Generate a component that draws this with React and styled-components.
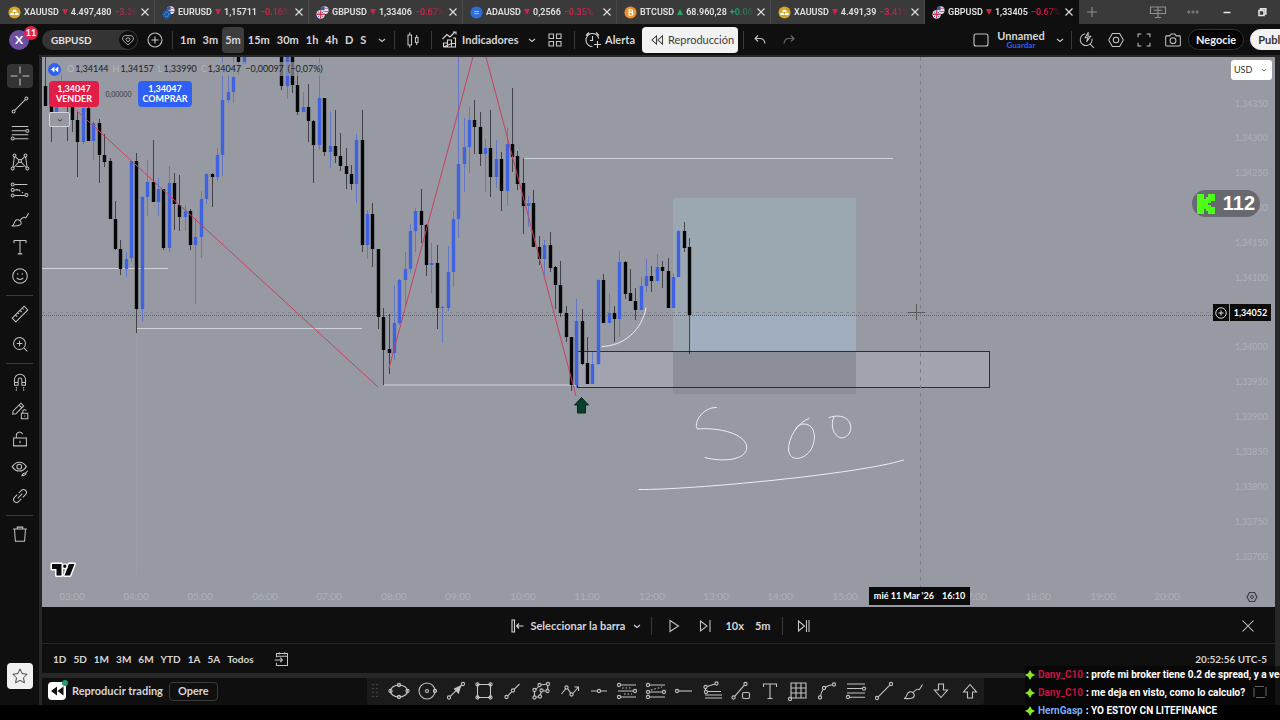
import { useState } from "react";
import styled, { createGlobalStyle, css } from "styled-components";

const UP = "#3f62e0";
const DOWN = "#060709";

// [high, top, bottom, low, 1 = up / 0 = down], null = out of view
const candles = [
  [57, 86, 106, 106, 0], [95, 105, 112, 142, 0], [104, 106, 112, 113, 1], [70, 90, 104, 106, 1],
  [95, 98, 106, 141, 0], [100, 107, 120, 132, 0], [112, 120, 142, 177, 0], [104, 108, 142, 144, 1],
  [104, 108, 141, 141, 0], [121, 123, 141, 160, 1], [119, 123, 155, 183, 0], [134, 155, 162, 167, 0],
  [158, 161, 219, 219, 0], [201, 219, 249, 250, 0], [240, 249, 269, 275, 0], [252, 259, 269, 277, 1],
  [161, 161, 258, 262, 1], [153, 161, 309, 333, 0], [196, 197, 309, 322, 1], [160, 182, 197, 216, 1],
  [140, 182, 202, 202, 0], [178, 189, 202, 216, 1], [189, 189, 248, 250, 0], [166, 183, 248, 252, 1],
  [173, 183, 204, 230, 0], [175, 205, 217, 231, 0], [205, 211, 217, 231, 1], [209, 211, 245, 250, 0],
  [218, 237, 245, 304, 1], [191, 199, 237, 258, 1], [173, 174, 199, 204, 1], [173, 174, 177, 207, 0],
  [148, 155, 177, 181, 1], [55, 100, 155, 176, 1], [75, 92, 100, 103, 1], [55, 77, 92, 103, 1],
  [55, 56, 62, 75, 0], [55, 56, 64, 66, 1], null, null, null, null, null, null,
  [55, 56, 86, 90, 0], [55, 56, 86, 99, 1], [55, 56, 85, 93, 0], [72, 85, 112, 115, 0],
  [92, 107, 112, 112, 1], [84, 107, 121, 142, 0], [120, 121, 145, 183, 0], [58, 98, 145, 150, 1],
  [98, 98, 152, 156, 0], [112, 146, 152, 168, 1], [110, 146, 156, 163, 0], [133, 156, 166, 171, 0],
  [148, 166, 174, 189, 0], [165, 174, 184, 190, 0], [134, 140, 184, 203, 1], [110, 140, 245, 252, 0],
  [210, 214, 245, 259, 1], [203, 214, 249, 267, 0], [249, 249, 317, 329, 0], [308, 317, 350, 385, 0],
  [314, 349, 353, 374, 0], [285, 323, 353, 360, 1], [279, 280, 323, 325, 1], [252, 269, 280, 306, 1],
  [224, 231, 269, 273, 1], [208, 211, 231, 252, 1], [189, 211, 225, 243, 0], [224, 225, 265, 276, 0],
  [243, 263, 265, 293, 1], [245, 263, 308, 329, 0], [306, 307, 308, 343, 1], [246, 272, 308, 311, 1],
  [211, 219, 272, 287, 1], [55, 164, 219, 238, 1], [118, 147, 164, 192, 1], [107, 120, 147, 173, 1],
  [100, 120, 127, 154, 0], [112, 127, 154, 166, 0], [139, 148, 154, 192, 1], [110, 148, 177, 197, 0],
  [140, 159, 177, 188, 1], [152, 159, 191, 211, 0], [128, 144, 191, 206, 1], [88, 144, 157, 172, 0],
  [151, 156, 184, 190, 0], [158, 183, 206, 234, 0], [196, 203, 206, 227, 1], [190, 203, 247, 247, 0],
  [236, 247, 259, 265, 0], [240, 245, 259, 275, 1], [232, 245, 268, 272, 0], [266, 267, 285, 309, 0],
  [261, 285, 313, 317, 0], [306, 313, 337, 342, 0], [337, 337, 385, 391, 0], [299, 321, 385, 388, 1],
  [309, 321, 364, 365, 0], [337, 363, 384, 384, 0], [352, 364, 384, 384, 1], [279, 280, 364, 365, 1],
  [274, 280, 323, 323, 0], [293, 313, 323, 323, 1], [306, 313, 319, 342, 0], [251, 262, 319, 337, 1],
  [261, 262, 294, 299, 0], [269, 293, 301, 301, 0], [288, 301, 310, 320, 0], [277, 286, 310, 310, 1],
  [259, 276, 286, 292, 1], [266, 276, 281, 292, 0], [254, 267, 281, 281, 1], [261, 267, 271, 288, 0],
  [258, 271, 308, 308, 0], [273, 277, 308, 308, 1], [230, 231, 277, 277, 1], [222, 231, 248, 252, 0],
  [238, 247, 315, 354, 0],
];

const tabs = [
  { coin: "gold", name: "XAUUSD", price: "4.497,480", change: "−3.29%" },
  { coin: "eur", name: "EURUSD", price: "1,15711", change: "−0.16%" },
  { coin: "gbp", name: "GBPUSD", price: "1,33406", change: "−0.67%" },
  { coin: "ada", name: "ADAUSD", price: "0,2566", change: "−0.35%" },
  { coin: "btc", name: "BTCUSD", price: "68.960,28", change: "+0.06%", up: true },
  { coin: "gold", name: "XAUUSD", price: "4.491,39", change: "−3.41%" },
  { coin: "gbp", name: "GBPUSD", price: "1,33405", change: "−0.67%", active: true },
];

const intervals = ["1m", "3m", "5m", "15m", "30m", "1h", "4h", "D", "S"];
const ranges = ["1D", "5D", "1M", "3M", "6M", "YTD", "1A", "5A", "Todos"];
const prices = [
  "1,34350", "1,34300", "1,34250", "1,34200", "1,34150", "1,34100", null,
  "1,34000", "1,33950", "1,33900", "1,33850", "1,33800", "1,33750", "1,33700",
];
const messages = [
  { user: "Dany_C10", color: "#c4123f", text: "profe mi broker tiene 0.2 de spread, y a veces" },
  { user: "Dany_C10", color: "#c4123f", text: "me deja en visto, como lo calculo?" },
  { user: "HernGasp", color: "#78aef5", text: "YO ESTOY CN LITEFINANCE" },
];

const dot = (x, y) => <circle key={`${x}-${y}`} cx={x} cy={y} r="1.6" />;

// all of them on a 24 x 24 grid
const icons = {
  cross: <path d="M12 2.5v7M12 14.5v7M2.5 12h7M14.5 12h7" />,
  trend: <>{dot(5, 19)}{dot(19, 5)}<path d="M6.2 17.8 17.8 6.2" /></>,
  fib: <>{dot(20, 9.7)}{dot(4, 18)}<path d="M3 5h18M3 9.5h15.4M3 14h18M5.6 18.3H21" /></>,
  pattern: <>{dot(6, 5)}{dot(18, 5)}{dot(12, 11)}{dot(4, 19)}{dot(20, 19)}<path d="M5.8 6.6 4.3 17.4M18.2 6.6l1.5 10.8M7 6.3l4 3.6M17 6.3l-4 3.6M10.7 12l-5.4 6M13.3 12l5.4 6M8 17h8" /></>,
  position: <>{dot(4, 6)}{dot(20, 12)}{dot(4, 18)}<path d="M5.6 6H21M3 12h15.400M5.6 18H21" /><path strokeDasharray="1.5 2" d="M7 9h9M9 15h8" /></>,
  ghost: <>{dot(4, 6)}{dot(4, 13)}{dot(20, 13)}{dot(4, 18)}<path d="M5.6 6H21M5.6 18H21M5.6 13h12.800" /><path strokeDasharray="1.5 2" d="m7 11 11-3" /></>,
  ghostLeft: <>{dot(4, 6)}{dot(4, 12)}{dot(4, 18)}{dot(19, 17.500)}<path d="M5.6 6H20M5.6 12H12M5.6 18h11.800" /><path strokeDasharray="1.5 2" d="m8 11 9 5" /></>,
  brush: <path d="M3 19.5c2.4-.4 2.4-2.5 3.2-4.4C7.200 12.700 10 12 12 13.700s1.600 4.300-.6 5.200c-2 .9-5 .8-8.400.6ZM12 13.600c1.800-2 4-4 5.200-3.200 1.300.9 1.400 0 4.300-4.900" />,
  text: <path d="M5.500 8V5h13v3M12 5v14.500M9.500 19.500h5" />,
  smile: <><circle cx="12" cy="12" r="8" /><path d="M8.500 14c1.500 2.500 5.500 2.500 7 0M9.500 9v1.500M14.500 9v1.500" /></>,
  ruler: <path d="m3.500 16.500 13-13 4 4-13 13ZM7 13l2 2M9.500 10.500 11 12M12 8l2 2M14.500 5.500 16 7" />,
  zoom: <><circle cx="11.500" cy="11.500" r="6.500" /><path d="m16.500 16.500 3.500 3.500M11.500 8.500v6M8.500 11.500h6" /></>,
  magnet: <><path d="M6 15.500V9.500a6 6 0 0 1 12 0v6h-4V9.700a2 2 0 0 0-4 0v5.800ZM6 12.500h4M14 12.500h4" /><path strokeDasharray="1.500 1" d="M8 17.500v4M16 17.500v4" /></>,
  penLock: <><path d="m4 15.500.5-3.500L13 3.500l3 3L7.500 15ZM11 5.500l3 3M13.500 14.500h7v6h-7ZM15 14.500V12.500a2 2 0 0 1 3.800-.8M17 17v1" /></>,
  lock: <path d="M5 11h14v8.500H5ZM8 11V8a3.500 3.500 0 0 1 6.800-1.200M12 14v2.500" />,
  eye: <><path d="M3.500 10.500c4-6.500 11.500-6.500 15.500 0-4 6.500-11.500 6.500-15.500 0Z" /><circle cx="11.200" cy="10.500" r="2.600" /><path d="M14 20.500c1-2.500 2-3.500 4-3s-1 3-4 3ZM18 17.500l2.500-2.500" /></>,
  link: <path d="m9.500 14.500 5-5M10.500 9 13.800 5.700a3.200 3.200 0 0 1 4.500 4.500L15 13.500M9 10.500l-3.300 3.300a3.200 3.200 0 0 0 4.500 4.500L13.500 15" />,
  trash: <path d="M4.500 6.500h15M9 6V4.500h6V6M6 6.500l1 13.500h10l1-13.500" />,
  star: <path d="m12 3.500 2.600 5.600 6 .8-4.400 4.200 1.100 6.100-5.300-3-5.300 3 1.100-6.100L3.400 9.900l6-.8Z" />,
  down: <path d="m9 11 3 2.500 3-2.500" />,
  up: <path d="m9 13 3-2.500 3 2.500" />,
  plusCircle: <><circle cx="12" cy="12" r="7" /><path d="M12 8.500v7M8.500 12h7" /></>,
  plus: <path d="M12 7v10M7 12h10" />,
  close: <path d="m8.500 8.500 7 7M15.500 8.500l-7 7" />,
  bigClose: <path d="m6 6 12 12M18 6 6 18" />,
  badge: <><path d="M12 19.500 4.500 12.500c-1.500-2.500 0-7 2.500-7h10c2.500 0 4 4.500 2.500 7Z" /><path d="m12 15-3-3.500 1-2.500h4l1 2.500Z" /></>,
  bars: <path d="M7 7h3.500v10H7ZM8.700 4.500V7M8.700 17v2.500M14.500 9.500H17v5h-2.500ZM15.700 7v2.500M15.700 14.500V17" />,
  indicators: <path d="M5.500 19v-4h4v4M9.500 19v-7h4v7M13.500 15.500h4V19h-12ZM17.500 19v-9h-2.500M4.500 11l4.500-4.500 3 2.500 5-5M15 4h3v2.500" />,
  layouts: <path d="M6 6h4.500v4.500H6ZM13.500 6H18v4.500h-4.500ZM6 13.500h4.500V18H6ZM13.500 13.500H18V18h-4.500Z" />,
  alarm: <path d="M17.800 10.500A6.500 6.500 0 1 0 11.500 18.500M11.500 8v4.500H9M5 7.500l3-3M15 4.500l3 3M16.500 13v7M13 16.500h7" />,
  rewind: <path d="M11.500 7.500v9l-5-4.500ZM18 7.500v9l-5-4.500Z" />,
  undo: <path d="M10 7.500 7 10.500l3 3M7 10.500h5.500c2.500 0 4 2 4.500 5" />,
  redo: <path d="m14 7.500 3 3-3 3M17 10.500h-5.500c-2.500 0-4 2-4.500 5" />,
  square: <rect x="5" y="6" width="14" height="12" rx="2" />,
  quick: <path d="M17.500 10.500a6.500 6.500 0 1 1-7.500-5.300M15.500 16.500l4 4M13.500 3.500 10 9.500h3L11.500 14l4.500-6h-3Z" />,
  hex: <><path d="M8 5h8l4 7-4 7H8l-4-7Z" /><circle cx="12" cy="12" r="3" /></>,
  full: <path d="M9 5.500H5.500V9M15 5.500h3.500V9M9 18.500H5.500V15M15 18.500h3.500V15" />,
  camera: <><path d="M5 7.500h3.500L10 5.500h4l1.500 2H19c.8 0 1 .5 1 1v9c0 .6-.4 1-1 1H5c-.6 0-1-.4-1-1v-9c0-.5.3-1 1-1Z" /><circle cx="12" cy="12.700" r="3.200" /></>,
  screens: <path d="M4.500 7h15v6.500h-15ZM12 7v10.500M9 17.500h6M8 10.300h8" />,
  more: <><circle cx="7" cy="12" r="1.300" /><circle cx="12" cy="12" r="1.300" /><circle cx="17" cy="12" r="1.300" /></>,
  minimize: <path strokeWidth="1.500" d="M8.500 12.500h7" />,
  restore: <path strokeWidth="1.500" d="M9 10.500h5v5H9ZM10.500 10V8.700h5.300v5.300h-1.300" />,
  selectBar: <path d="M6 6h2.500v12H6ZM17.500 12h-7M13 9.500 10.500 12l2.500 2.500" />,
  play: <path d="M8 6.500 16.500 12 8 17.500Z" />,
  next: <path d="M7.500 7 14 12l-6.500 5ZM17 6v12" />,
  toEnd: <path d="M6.500 7 12.500 12l-6 5ZM14.500 6v12M17 6v12" />,
  calendar: <path d="M6 10V6h12v13H6v-3M6 9h12M9 4.500V7M15 4.500V7M4 13h8.500M10 10.500l2.500 2.500-2.500 2.500" />,
  ellipse: <><ellipse cx="12" cy="12" rx="8.500" ry="6" />{dot(3.500, 12)}{dot(20.500, 12)}{dot(12, 6)}{dot(12, 18)}</>,
  circle: <><circle cx="12" cy="12" r="8" />{dot(20, 12)}<circle cx="12" cy="12" r="1.500" /></>,
  arrow: <>{dot(5, 18.500)}{dot(19, 5)}<path d="M6.200 17.300 17.800 6.200" /><path fill="currentColor" d="m16.500 7-2 7-4-4Z" /></>,
  rect: <><path d="M5.500 5.500h13v13h-13Z" />{dot(5.500, 5.500)}{dot(18.500, 5.500)}{dot(5.500, 18.500)}{dot(18.500, 18.500)}</>,
  ray: <>{dot(5.500, 18)}{dot(12, 11.500)}<path d="m6.700 16.800 4-4M13.200 10.300 18.500 5" /></>,
  path: <>{dot(5.500, 11)}{dot(10.500, 6)}{dot(19, 5)}{dot(18.500, 12)}{dot(5.500, 18.500)}{dot(11, 17.500)}{dot(12.500, 11.500)}<path d="M5.500 12.600v4.300M7 10.500l2.500-3M12 5.800l5.400-.6M18.800 6.600l-.2 3.800M16.900 12l-2.800-.3M12.300 13l-1 3M7.100 18.300l2.300-.5" /></>,
  zigzag: <><path d="m3.500 15 4-5M9.700 9.800l3 4.300M14.800 14.500 20 8.500M16.500 8h4v4" />{dot(8.500, 8.500)}{dot(13.500, 15.500)}</>,
  hline: <>{dot(12, 12)}<path d="M4 12h6.400M13.600 12H20" /></>,
  hray: <>{dot(5, 12)}<path d="M6.600 12H20" /></>,
  pitch: <>{dot(4.500, 8)}{dot(15.500, 4.500)}{dot(5, 13)}<path d="m6 7.500 8-2.500M4.500 9.600v2M6.600 12.500H20M4 16h17M4 19h17" /></>,
  lineBox: <>{dot(4.500, 18.500)}{dot(16.500, 5)}<path d="M5.700 17.300 15.300 6.200" /><rect x="13.500" y="13.500" width="7" height="6" rx="1.500" /></>,
  grid: <><path d="M5 4h15v15H5ZM10 4v15M15 4v15M5 9h15M5 14h15" />{dot(4, 20)}</>,
  curve: <>{dot(5, 18.500)}{dot(9, 9)}{dot(19, 5.500)}<path d="M5.500 17c.5-3 1.500-5 2.500-6.500M10.500 8.200c2-1.500 4-2.400 7-2.500" /></>,
  arrowDown: <path d="M9.500 5h5v6h4L12 18.500 5.500 11h4Z" />,
  arrowUp: <path d="M9.500 19h5v-6h4L12 5.500 5.500 13h4Z" />,
  frame: <path strokeDasharray="9 2" d="M7 6.500h10a1 1 0 0 1 1 1v9a1 1 0 0 1-1 1H7a1 1 0 0 1-1-1v-9a1 1 0 0 1 1-1Z" />,
};

const drawTools = [
  ["trend", "fib", "pattern", "ghostLeft", "brush", "text", "smile"],
  ["ruler", "zoom"],
  ["magnet", "penLock", "lock", "eye", "link"],
];

const favorites = [
  "ellipse", "circle", "arrow", "rect", "ray", "path", "zigzag", "hline", "position", "ghost", "hray",
  "pitch", "lineBox", "text", "grid", "curve", "fib", "trend", "brush", "arrowDown", "arrowUp",
];

const Icon = ({ name, size = 24 }) => (
  <Svg viewBox="0 0 24 24" width={size} height={size} aria-hidden="true">
    {icons[name]}
  </Svg>
);

const Coin = ({ kind }) => {
  if (kind === "gold") {
    return (
      <CoinSvg viewBox="0 0 14 14">
        <circle cx="7" cy="7" r="6.500" fill="#d3a62a" />
        <path fill="#fff" d="M5.500 4h3l1 2.500h-5ZM3 7.200h3.200l.6 2.600H2.200ZM7.800 7.200H11l.8 2.600H7.200Z" />
      </CoinSvg>
    );
  }
  if (kind === "btc") {
    return (
      <CoinSvg viewBox="0 0 14 14">
        <circle cx="7" cy="7" r="6.500" fill="#f0922b" />
        <path fill="none" stroke="#fff" strokeWidth="1.200" d="M5.500 4h2.200a1.400 1.400 0 0 1 0 2.900H5.500ZM5.500 6.900h2.600a1.500 1.500 0 0 1 0 3H5.500ZM6.500 3v1M6.500 10v1" />
      </CoinSvg>
    );
  }
  if (kind === "ada") {
    return (
      <CoinSvg viewBox="0 0 14 14">
        <circle cx="7" cy="7" r="6.500" fill="#2d6fd8" />
        <path stroke="#a9c8ff" strokeWidth="1" d="M4.500 6h5M4.500 8.200h5" />
      </CoinSvg>
    );
  }
  return (
    <CoinSvg viewBox="0 0 14 14">
      <circle cx="9.300" cy="4.500" r="4.200" fill="#e8e8ee" />
      <path fill="#3857b5" d="M9.300.3v4.200H5.100A4.200 4.200 0 0 1 9.300.3Z" />
      <path stroke="#d8455a" d="M9.300 2.500h3.500M5.500 6h7.500" />
      {kind === "eur" ? (
        <>
          <circle cx="5" cy="9" r="4.600" fill="#1459a8" />
          <circle cx="5" cy="9" r="2.400" fill="none" stroke="#7fb8e8" strokeDasharray="1 1" />
        </>
      ) : (
        <>
          <circle cx="5" cy="9" r="4.600" fill="#e6e3ec" />
          <path stroke="#d63b52" strokeWidth="1.600" d="M5 4.500v9M.5 9h9" />
          <path stroke="#4a62b5" d="m2 6 1.500 1.500M8 6 6.500 7.500M2 12l1.500-1.500M8 12l-1.500-1.500" />
        </>
      )}
    </CoinSvg>
  );
};

const Chart = () => (
  <ChartSvg viewBox="42 57 1233 550" preserveAspectRatio="xMinYMin slice">
    <path stroke="#9b9da7" d="M136.500 330V575" />
    <rect x="579" y="351.500" width="411" height="36" fill="#a1a3ae" />
    <rect x="673" y="198" width="183" height="153" fill="#9ba7b1" />
    <rect x="691" y="315" width="165" height="36" fill="#a1aec0" />
    <rect x="673" y="351" width="183" height="43" fill="#8c8f97" />
    <rect x="577.500" y="351.500" width="412" height="36" fill="none" stroke="#2b2d31" />

    <g stroke="#d2d3d8">
      <path d="M42 268.500h126M137 328.500h225M384 385h192M523 158.500h370" />
    </g>
    <path stroke="#5f626a" strokeDasharray="1 1" d="M42 315.500h1189" />
    <path stroke="#868992" strokeDasharray="3 3" d="M42 312.500h1171" />
    <path stroke="#7d8089" strokeDasharray="4 4" d="M920.500 57v530" />

    {candles.map((c, i) => {
      if (!c) return null;
      const [high, top, bottom, low, up] = c;
      const x = Math.round(45.2 + i * 5.365);
      return (
        <g key={i} fill={up ? UP : DOWN}>
          <rect x={x} y={high} width="1" height={low - high} opacity="0.6" />
          <rect x={x - 1.2} y={top} width="3.4" height={bottom - top} />
        </g>
      );
    })}

    <path fill="none" stroke="#c9405f" d="M76 110 378 387M389 368 473 57M486 57 576 396" />
    <path fill="#0a4032" stroke="#06281f" d="m581.500 397.500 7 7.500h-3v8h-8v-8h-3Z" />
    <g fill="none" stroke="#eeeef1" strokeLinecap="round">
      <path d="M602 346.500C624 346 642 330 646 308" />
      <path d="M716.500 407.500C702 407 693 424 697.500 429 719 427 746 434 746.700 447 747 461 721 462 705 457.500" />
      <path d="M809 418.500C798 422 788 438 788.500 450 790 462 803 460 810 451 817 441 816 424 804 424 800 424 797 426 795 430" />
      <path d="M829 417.500C836 415 846 415 850 423 853 432 847 438 841 438 833 436 830 424 834 417" />
      <path d="M639 489.500C690 490 860 474 903.500 460" />
    </g>
    <path stroke="#5c5a58" d="M908 312.500h17M916.500 304v16" />

    <AxisLabels>
      {prices.map((p, i) => p && (
        <PriceLabel key={p} x="1268" y={Math.round(106.500 + i * 34.85)}>{p}</PriceLabel>
      ))}
      {Array.from({ length: 18 }, (_, i) => (
        <TimeLabel key={i} x={Math.round(71.5 + i * 64.450)} y="600">
          {String(i + 3).padStart(2, "0")}:00
        </TimeLabel>
      ))}
    </AxisLabels>
    <path fill="none" stroke="#3a3c42" strokeWidth="1.200" d="m1249.500 592.500h5l2.500 4.500-2.500 4.500h-5l-2.500-4.500Z" />
    <circle cx="1252" cy="597" r="1.500" fill="none" stroke="#3a3c42" />
  </ChartSvg>
);

const App = () => {
  const [interval, setInterval] = useState("5m");
  const [tool, setTool] = useState("cross");

  return (
    <Page>
      <GlobalStyle />
      <TabBar>
        {tabs.map((t, i) => (
          <Tab key={i} $active={t.active}>
            <TabLink href={`#${t.name}`}>
              <Coin kind={t.coin} />
              <span>{t.name}</span>
              <Triangle $up={t.up} />
              <span>{t.price}</span>
              <Change $up={t.up}>{t.change}</Change>
            </TabLink>
            <TabClose aria-label="Cerrar pestaña"><Icon name="close" /></TabClose>
          </Tab>
        ))}
        <WindowButton $w={26} aria-label="Nueva pestaña"><Icon name="plus" /></WindowButton>
        <Spacer />
        <WindowButton $w={36} aria-label="Ventanas"><Icon name="screens" /></WindowButton>
        <WindowButton $w={34} aria-label="Más"><Icon name="more" size={20} /></WindowButton>
        <WindowButton $w={34} $bright aria-label="Minimizar"><Icon name="minimize" /></WindowButton>
        <WindowButton $w={36} $bright aria-label="Restaurar"><Icon name="restore" /></WindowButton>
      </TabBar>

      <TopBar>
        <AvatarCell>
          <Avatar aria-label="Perfil">X</Avatar>
          <AvatarBadge>11</AvatarBadge>
        </AvatarCell>
        <SymbolButton>GBPUSD<SymbolBadge><Icon name="badge" size={16} /></SymbolBadge></SymbolButton>
        <IconButton $w={34} aria-label="Comparar"><Icon name="plusCircle" /></IconButton>
        <Divider />
        <Section $w={221}>
          {intervals.map((v) => (
            <IntervalButton key={v} $active={v === interval} onClick={() => setInterval(v)}>{v}</IntervalButton>
          ))}
          <IconButton $w={24} aria-label="Intervalos"><Icon name="down" /></IconButton>
        </Section>
        <Divider />
        <IconButton $w={36} aria-label="Velas"><Icon name="bars" /></IconButton>
        <Divider />
        <Section $w={142}>
          <TextButton><Icon name="indicators" />Indicadores</TextButton>
          <IconButton $w={22} aria-label="Favoritos"><Icon name="down" /></IconButton>
          <IconButton $w={24} aria-label="Plantillas"><Icon name="layouts" /></IconButton>
        </Section>
        <Divider />
        <Section $w={168}>
          <TextButton><Icon name="alarm" />Alerta</TextButton>
          <ReplayButton><Icon name="rewind" size={22} />Reproducción</ReplayButton>
        </Section>
        <Divider />
        <IconButton $w={32} aria-label="Deshacer"><Icon name="undo" /></IconButton>
        <IconButton $w={26} $dim aria-label="Rehacer"><Icon name="redo" /></IconButton>
        <Spacer />
        <RightSection>
          <IconButton $w={24} aria-label="Diseño"><Icon name="square" /></IconButton>
          <LayoutName>Unnamed<small>Guardar</small></LayoutName>
          <IconButton $w={22} aria-label="Diseños"><Icon name="down" /></IconButton>
          <Divider />
          <IconButton $w={30} aria-label="Búsqueda rápida"><Icon name="quick" size={22} /></IconButton>
          <IconButton $w={28} aria-label="Configuración"><Icon name="hex" size={22} /></IconButton>
          <IconButton $w={28} aria-label="Pantalla completa"><Icon name="full" size={22} /></IconButton>
          <IconButton $w={30} aria-label="Captura"><Icon name="camera" size={22} /></IconButton>
          <Pill>Negocie</Pill>
          <Pill $light>Publicar</Pill>
        </RightSection>
      </TopBar>

      <Body>
        <SideBar>
          <ToolGroup $h={224}>
            <ToolButton $active={tool === "cross"} onClick={() => setTool("cross")} aria-label="cross">
              <Icon name="cross" />
            </ToolButton>
            {drawTools[0].map((n) => (
              <ToolButton key={n} $active={tool === n} onClick={() => setTool(n)} aria-label={n}>
                <Icon name={n} size={22} />
              </ToolButton>
            ))}
          </ToolGroup>
          <ToolLine />
          <ToolGroup $h={54}>
            {drawTools[1].map((n) => <ToolButton key={n} aria-label={n}><Icon name={n} size={22} /></ToolButton>)}
          </ToolGroup>
          <ToolLine />
          <ToolGroup $h={138}>
            {drawTools[2].map((n) => <ToolButton key={n} aria-label={n}><Icon name={n} size={22} /></ToolButton>)}
          </ToolGroup>
          <ToolLine />
          <ToolButton aria-label="Eliminar"><Icon name="trash" size={22} /></ToolButton>
          <StarButton aria-label="Favoritos"><Icon name="star" size={20} /></StarButton>
        </SideBar>

        <Main>
          <ChartArea>
            <Chart />
            <Legend>
              <LegendIcon>
                <svg width="9" height="7" viewBox="0 0 14 12"><path fill="#fff" d="M7 1v10L1 6ZM13.500 1v10L7.500 6Z" /></svg>
              </LegendIcon>
              <span><i>O</i>1,34144</span>
              <span><i>H</i>1,34157</span>
              <span><i>L</i>1,33990</span>
              <span><i>C</i>1,34047</span>
              <span>−0,00097</span>
              <span>(−0,07%)</span>
            </Legend>
            <Orders>
              <OrderButton $color="#e01e47" $w={50}>1,34047<br />VENDER</OrderButton>
              <Spread>0,00000</Spread>
              <OrderButton $color="#2e60f5" $w={54}>1,34047<br />COMPRAR</OrderButton>
            </Orders>
            <FoldButton aria-label="Contraer"><Icon name="down" size={18} /></FoldButton>
            <Currency>
              <select aria-label="Divisa" defaultValue="USD"><option>USD</option><option>EUR</option></select>
              <Icon name="down" size={16} />
            </Currency>
            <PriceTag>
              <button aria-label="Añadir alerta"><Icon name="plusCircle" size={18} /></button>
              <span>1,34052</span>
            </PriceTag>
            <TimeTag><span>mié 11 Mar '26</span><span>16:10</span></TimeTag>
            <Logo viewBox="0 0 26 16">
              <path fill="#0b0b0d" stroke="#fff" strokeWidth="3" strokeLinejoin="round" paintOrder="stroke" d="M2 2h9.500v11.500H6.500V7H2ZM19 2h5.500L20 13.500h-5.500Z" />
              <circle cx="14.800" cy="4.300" r="2.300" fill="#0b0b0d" stroke="#fff" strokeWidth="1.200" />
            </Logo>
          </ChartArea>

          <ReplayBar>
            <span />
            <ReplayControls>
              <TextButton><Icon name="selectBar" />Seleccionar la barra<Icon name="down" /></TextButton>
              <Divider />
              <IconButton $w={44} aria-label="Reproducir"><Icon name="play" /></IconButton>
              <IconButton $w={18} aria-label="Adelante"><Icon name="next" /></IconButton>
              <SpeedButton>10x</SpeedButton>
              <SpeedButton>5m</SpeedButton>
              <Divider />
              <IconButton $w={42} aria-label="Ir al final"><Icon name="toEnd" /></IconButton>
            </ReplayControls>
            <CloseReplay aria-label="Cerrar"><Icon name="bigClose" size={22} /></CloseReplay>
          </ReplayBar>

          <RangeBar>
            {ranges.map((r) => <RangeButton key={r}>{r}</RangeButton>)}
            <IconButton $w={42} aria-label="Ir a la fecha"><Icon name="calendar" size={22} /></IconButton>
            <Spacer />
            <time>20:52:56 UTC-5</time>
          </RangeBar>

          <BottomBar>
            <BottomLeft>
              <ReplayLogo>
                <svg width="14" height="12" viewBox="0 0 14 12"><path fill="#111" d="M7 1.500v9L1 6ZM13.500 1.500v9L7.500 6Z" /></svg>
                <Status />
              </ReplayLogo>
              <span>Reproducir trading</span>
              <OutlineButton>Opere</OutlineButton>
            </BottomLeft>
            <Favorites>
              <svg width="8" height="14" viewBox="0 0 8 14" fill="#555">
                {[1, 5, 9, 13].map((y) => <g key={y}><circle cx="2" cy={y - .5} r="0.800" /><circle cx="6" cy={y - .5} r="0.800" /></g>)}
              </svg>
              {favorites.map((n) => <FavoriteButton key={n} aria-label={n}><Icon name={n} size={24} /></FavoriteButton>)}
            </Favorites>
            <Spacer />
            <IconButton $w={24} $dim aria-label="Abrir panel"><Icon name="up" /></IconButton>
            <IconButton $w={24} aria-label="Maximizar panel"><Icon name="frame" /></IconButton>
          </BottomBar>
        </Main>
      </Body>

      <KickBadge>
        <svg width="18" height="20" viewBox="0 0 18 20" fill="#4dff17">
          <rect x="0" y="0" width="7" height="20" />
          <rect x="6" y="5" width="5" height="10" />
          <rect x="9" y="3" width="5" height="6" />
          <rect x="9" y="11" width="5" height="6" />
          <rect x="11" y="0" width="7" height="7" />
          <rect x="11" y="13" width="7" height="7" />
        </svg>
        112
      </KickBadge>

      <Chat>
        {messages.map((m, i) => (
          <Message key={i}>
            <Spark viewBox="0 0 10 10"><path fill="#8be52b" d="M5 0 6.800 3.200 10 5 6.800 6.800 5 10 3.200 6.800 0 5 3.200 3.200Z" /></Spark>
            <User $color={m.color}>{m.user}</User>
            <span>: {m.text}</span>
          </Message>
        ))}
      </Chat>
    </Page>
  );
};

export default App;

const GlobalStyle = createGlobalStyle`
  * { box-sizing: border-box; }
  body { margin: 0; background: #000; }
  button, select {
    font: inherit;
    color: inherit;
    margin: 0;
    padding: 0;
    border: 0;
    background: none;
    cursor: pointer;
  }
`;
const center = css`
  display: flex;
  align-items: center;
  justify-content: center;
`;
const Page = styled.div`
  position: relative;
  display: flex;
  flex-direction: column;
  height: 100vh;
  padding-bottom: 15px;
  overflow: hidden;
  background: #000;
  color: #d6d6d6;
  font: 700 11px/14px Lato, "Open Sans", sans-serif;
`;
const Svg = styled.svg`
  flex: none;
  fill: none;
  stroke: currentColor;
  stroke-width: 1.1;
`;
const CoinSvg = styled.svg`
  flex: none;
  width: 13px;
  height: 13px;
`;
const Spacer = styled.div`
  flex: 1;
`;
const Divider = styled.div`
  flex: none;
  width: 1px;
  height: 18px;
  background: #3a3a3a;
`;

const TabBar = styled.nav`
  display: flex;
  flex: none;
  height: 24px;
  padding-left: 1px;
  background: #3b3a3b;
  color: #e2e2e2;
  font: 600 9px/12px Roboto, sans-serif;
`;
const Tab = styled.div`
  display: flex;
  align-items: center;
  flex: 0 1 154px;
  min-width: 0;
  padding: 0 3px 0 7px;
  border-right: 1px solid ${(p) => (p.$active ? "#0f0f0f" : "#4a4a4a")};
  background: ${(p) => (p.$active ? "#0f0f0f" : "transparent")};
`;
const TabLink = styled.a`
  display: flex;
  align-items: center;
  flex: 1;
  gap: 3px;
  min-width: 0;
  overflow: hidden;
  color: inherit;
  text-decoration: none;
  white-space: nowrap;
  mask-image: linear-gradient(90deg, #000 85%, transparent);
`;
const Triangle = styled.i`
  flex: none;
  border: 3px solid transparent;
  ${(p) => (p.$up ? "border-bottom: 6px solid #2ba36b; border-top: 0;" : "border-top: 6px solid #d3214a; border-bottom: 0;")}
`;
const Change = styled.span`
  color: ${(p) => (p.$up ? "#2ba36b" : "#d3214a")};
`;
const TabClose = styled.button`
  ${center}
  width: 12px;
`;
const WindowButton = styled.button`
  ${center}
  width: ${(p) => p.$w}px;
  color: ${(p) => (p.$bright ? "#e8e8e8" : "#909090")};
`;

const TopBar = styled.header`
  display: flex;
  align-items: center;
  flex: none;
  height: 31px;
  background: #0f0f0f;
  overflow: hidden;
`;
const Section = styled.div`
  display: flex;
  align-items: center;
  flex: none;
  width: ${(p) => p.$w}px;
  height: 100%;
  padding-left: 4px;
`;
const IconButton = styled.button`
  ${center}
  flex: none;
  width: ${(p) => p.$w}px;
  height: 24px;
  color: ${(p) => (p.$dim ? "#6a6a6a" : "#c4c4c4")};
`;
const TextButton = styled.button`
  ${center}
  flex: none;
  padding: 0 2px;
  height: 24px;
`;
const AvatarCell = styled.div`
  position: relative;
  flex: none;
  width: 42px;
  padding-left: 9px;
`;
const Avatar = styled.button`
  ${center}
  width: 20px;
  height: 20px;
  border-radius: 50%;
  background: #6d4fa0;
  color: #fff;
  font-size: 12px;
`;
const AvatarBadge = styled.span`
  position: absolute;
  top: -4px;
  left: 24px;
  width: 14px;
  border-radius: 7px;
  background: #e0244b;
  color: #fff;
  font-size: 9px;
  text-align: center;
`;
const SymbolButton = styled.button`
  display: flex;
  align-items: center;
  justify-content: space-between;
  flex: none;
  width: 96px;
  height: 20px;
  padding: 0 1px 0 9px;
  border-radius: 10px;
  background: #343434;
  color: #e4e4e4;
  font-size: 10px;
`;
const SymbolBadge = styled.span`
  ${center}
  width: 18px;
  height: 18px;
  border-radius: 50%;
  background: #0f0f0f;
`;
const IntervalButton = styled.button`
  flex: none;
  height: 26px;
  margin-right: 1px;
  padding: 0 3px;
  border-radius: 4px;
  background: ${(p) => (p.$active ? "#3d3d3d" : "transparent")};
`;
const ReplayButton = styled.button`
  ${center}
  height: 26px;
  width: 96px;
  margin: 0 5px 0 auto;
  border-radius: 4px;
  background: #f2f2f2;
  color: #3b3b3b;
  font-weight: 400;
`;
const RightSection = styled.div`
  display: flex;
  align-items: center;
  flex: none;
  width: 311px;
  overflow: hidden;
`;
const LayoutName = styled.button`
  display: flex;
  flex-direction: column;
  align-items: center;
  flex: none;
  width: 56px;
  line-height: 11px;
  small {
    color: #2f5df0;
    font-size: 8px;
    line-height: 8px;
  }
`;
const Pill = styled.button`
  flex: none;
  height: 21px;
  margin-right: 6px;
  padding: 0 7px;
  border: 1px solid ${(p) => (p.$light ? "#f2f2f2" : "#333")};
  border-radius: 11px;
  background: ${(p) => (p.$light ? "#f2f2f2" : "#000")};
  color: ${(p) => (p.$light ? "#333" : "#f2f2f2")};
`;

const Body = styled.div`
  display: flex;
  flex: 1;
  min-height: 0;
  gap: 3px;
  padding-right: 5px;
  background: #272727;
`;
const SideBar = styled.aside`
  display: flex;
  flex-direction: column;
  align-items: center;
  flex: none;
  width: 39px;
  padding: 9px 0 16px;
  background: #0f0f0f;
`;
const ToolGroup = styled.div`
  display: flex;
  flex-direction: column;
  justify-content: space-between;
  height: ${(p) => p.$h}px;
`;
const ToolButton = styled.button`
  ${center}
  width: 26px;
  height: 24px;
  border-radius: 4px;
  background: ${(p) => (p.$active ? "#343434" : "transparent")};
  color: #c4c4c4;
`;
const ToolLine = styled.div`
  width: 27px;
  height: 1px;
  margin: 7px 0 6px;
  background: #3a3a3a;
`;
const StarButton = styled.button`
  ${center}
  width: 26px;
  height: 26px;
  margin-top: auto;
  border-radius: 4px;
  background: #f0f0f0;
  color: #333;
`;

const Main = styled.main`
  display: flex;
  flex-direction: column;
  flex: 1;
  min-width: 0;
  padding-top: 2px;
`;
const ChartArea = styled.section`
  position: relative;
  flex: 1;
  min-height: 0;
  overflow: hidden;
  background: #979aa3;
`;
const ChartSvg = styled.svg`
  position: absolute;
  inset: 0;
  width: 100%;
  height: 100%;
`;
const AxisLabels = styled.g`
  fill: #adb0b8;
  font-family: Lato, sans-serif;
  font-weight: 400;
`;
const PriceLabel = styled.text`
  font-size: 9px;
  text-anchor: end;
`;
const TimeLabel = styled.text`
  font-size: 10px;
  text-anchor: middle;
`;
const Legend = styled.div`
  position: absolute;
  top: 5px;
  left: 6px;
  display: flex;
  align-items: center;
  gap: 4px;
  background: rgba(151, 154, 163, 0.7);
  color: #1b1d21;
  font-size: 9px;
  font-weight: 400;
  i {
    margin-right: 1px;
    color: #b4b7be;
    font-style: normal;
  }
`;
const LegendIcon = styled.span`
  ${center}
  width: 13px;
  height: 13px;
  margin-right: 2px;
  border-radius: 50%;
  background: #2e60f5;
`;
const Orders = styled.div`
  position: absolute;
  top: 24px;
  left: 7px;
  display: flex;
  align-items: center;
`;
const OrderButton = styled.button`
  width: ${(p) => p.$w}px;
  height: 26px;
  border-radius: 4px;
  background: ${(p) => p.$color};
  color: #fff;
  font-size: 9px;
  line-height: 10px;
`;
const Spread = styled.span`
  width: 39px;
  color: #33353a;
  font-size: 7px;
  font-weight: 400;
  text-align: center;
`;
const FoldButton = styled.button`
  ${center}
  position: absolute;
  top: 55px;
  left: 7px;
  width: 21px;
  height: 15px;
  border: 1px solid #d4d5da;
  border-radius: 2px;
  background: #979aa3;
  color: #222;
`;
const Currency = styled.div`
  position: absolute;
  top: 3px;
  right: 3px;
  display: flex;
  align-items: center;
  width: 41px;
  height: 20px;
  border-radius: 3px;
  background: #fff;
  color: #333;
  select {
    flex: 1;
    width: 26px;
    padding-left: 3px;
    appearance: none;
    font-size: 9px;
    font-weight: 400;
  }
`;
const PriceTag = styled.div`
  position: absolute;
  top: 247px;
  right: 4px;
  display: flex;
  gap: 1px;
  color: #fff;
  font-size: 9px;
  button,
  span {
    ${center}
    width: 41px;
    height: 17px;
    background: #0c0c0d;
  }
  button {
    width: 16px;
  }
`;
const TimeTag = styled.div`
  ${center}
  position: absolute;
  left: 827px;
  bottom: 2px;
  gap: 8px;
  width: 101px;
  height: 18px;
  background: #0c0c0d;
  color: #fff;
  font-size: 9px;
`;
const Logo = styled.svg`
  position: absolute;
  left: 8px;
  bottom: 29px;
  width: 26px;
  height: 16px;
`;

const ReplayBar = styled.div`
  display: grid;
  grid-template-columns: 1fr auto 1fr;
  align-items: center;
  flex: none;
  height: 37px;
  border-bottom: 1px solid #262626;
  background: #0f0f0f;
`;
const ReplayControls = styled.div`
  display: flex;
  align-items: center;
  padding: 2px 0 0 12px;
`;
const SpeedButton = styled.button`
  padding: 0 0 0 11px;
  & + div { margin-left: 11px; }
`;
const CloseReplay = styled.button`
  justify-self: end;
  height: 22px;
  margin: 2px 16px 0 0;
`;
const RangeBar = styled.div`
  display: flex;
  align-items: center;
  flex: none;
  gap: 7px;
  height: 29px;
  padding: 0 8px 0 11px;
  background: #0f0f0f;
  font-size: 10px;
`;
const RangeButton = styled.button`
  flex: none;
`;
const BottomBar = styled.footer`
  display: flex;
  align-items: center;
  flex: none;
  height: 27px;
  margin-top: 5px;
  padding-right: 3px;
  background: #0f0f0f;
`;
const BottomLeft = styled.div`
  display: flex;
  align-items: center;
  flex: none;
  gap: 6px;
  width: 325px;
  padding: 0 0 1px 6px;
`;
const ReplayLogo = styled.span`
  ${center}
  position: relative;
  width: 18px;
  height: 18px;
  border-radius: 4px;
  background: #fff;
`;
const Status = styled.i`
  position: absolute;
  top: -2px;
  right: -2px;
  width: 6px;
  height: 6px;
  border-radius: 50%;
  background: #1f9d78;
`;
const OutlineButton = styled.button`
  height: 19px;
  padding: 0 8px;
  border: 1px solid #3a3a3a;
  border-radius: 4px;
`;
const Favorites = styled.div`
  display: flex;
  align-items: center;
  justify-content: space-between;
  flex: 0 1 617px;
  height: 27px;
  padding: 0 2px 1px 4px;
  border-radius: 0 0 4px 4px;
  background: #1b1b1b;
  & > svg { margin-right: 3px; }
`;
const FavoriteButton = styled.button`
  ${center}
  width: 24px;
  height: 24px;
  color: #c4c4c4;
`;

const KickBadge = styled.div`
  position: absolute;
  top: 190px;
  right: 20px;
  display: flex;
  align-items: center;
  gap: 8px;
  height: 27px;
  padding: 0 5px 0 5px;
  border-radius: 14px;
  background: #68696e;
  color: #fff;
  font: 700 20px/27px "Liberation Sans", sans-serif;
`;
const Chat = styled.div`
  position: absolute;
  right: 0;
  bottom: 0;
  width: 255px;
  overflow: hidden;
  background: rgba(0, 0, 0, 0.5);
  color: #fff;
  font: 700 10px/18px Roboto, sans-serif;
`;
const Message = styled.div`
  display: flex;
  align-items: center;
  gap: 3px;
  white-space: nowrap;
`;
const Spark = styled.svg`
  flex: none;
  width: 10px;
  height: 10px;
`;
const User = styled.span`
  color: ${(p) => p.$color};
`;
